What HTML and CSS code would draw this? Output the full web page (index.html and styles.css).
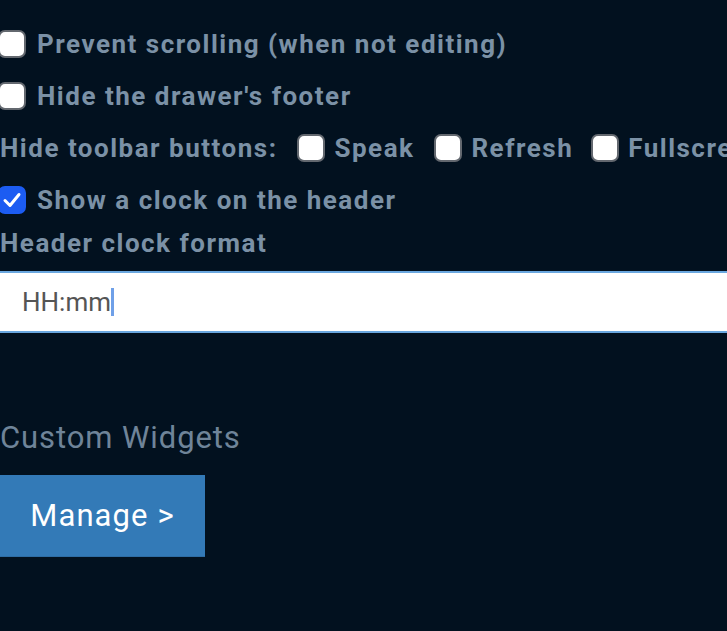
FILE: index.html
```html
<!DOCTYPE html>
<html>
<head>
<meta charset="utf-8">
<link rel="stylesheet" href="styles.css">
</head>
<body>
<div class="panel">
  <label class="row"><span class="cb"></span><span class="lbl">Prevent scrolling (when not editing)</span></label>
  <label class="row"><span class="cb"></span><span class="lbl">Hide the drawer's footer</span></label>
  <div class="row">
    <span class="lbl">Hide toolbar buttons:</span>
    <label class="opt"><span class="cb"></span><span class="lbl">Speak</span></label>
    <label class="opt"><span class="cb"></span><span class="lbl">Refresh</span></label>
    <label class="opt"><span class="cb"></span><span class="lbl">Fullscreen</span></label>
  </div>
  <label class="row"><span class="cb checked"><svg viewBox="0 0 28 28" width="28" height="28"><path d="M7 14.5 L12 19.5 L21 8.5" fill="none" stroke="#fff" stroke-width="3" stroke-linecap="round" stroke-linejoin="round"/></svg></span><span class="lbl">Show a clock on the header</span></label>
  <div class="field-label">Header clock format</div>
  <div class="input"><span class="val">HH:mm</span><span class="caret"></span></div>
  <h2 class="section">Custom Widgets</h2>
  <button class="btn">Manage &gt;</button>
</div>
</body>
</html>
```
FILE: styles.css
```css
html, body {
  margin: 0;
  padding: 0;
  background: #02111f;
  overflow: hidden;
}
.panel {
  font-family: Roboto, "Liberation Sans", sans-serif;
  padding-top: 30px;
  width: 1000px;
}
.row {
  display: flex;
  align-items: center;
  height: 28px;
  margin-bottom: 24px;
  white-space: nowrap;
}
.opt {
  display: flex;
  align-items: center;
  margin-left: 20px;
}
.opt:nth-of-type(n+3) {
  margin-left: 18px;
}
.cb {
  box-sizing: border-box;
  width: 28px;
  height: 28px;
  border: 2px solid #63686f;
  border-radius: 7px;
  background: #fff;
  flex: none;
  margin-right: 9px;
  display: inline-block;
}
.cb.checked {
  background: #1c5cf2;
  border-color: #1c5cf2;
  position: relative;
}
.cb.checked svg {
  position: absolute;
  left: -2px;
  top: -2px;
}
.row > .cb:first-child {
  margin-left: -2px;
  margin-right: 11px;
}
.lbl {
  font-size: 26px;
  font-weight: 700;
  color: #7b91a6;
  letter-spacing: 1.5px;
}
.field-label {
  font-size: 26px;
  font-weight: 700;
  color: #7b91a6;
  letter-spacing: 1.5px;
  margin-top: -9px;
  height: 28px;
  line-height: 28px;
}
.input {
  margin-top: 14px;
  height: 58px;
  border-top: 2px solid #6aa7df;
  border-bottom: 2px solid #6aa7df;
  background: #fff;
  display: flex;
  align-items: center;
  padding-left: 22px;
}
.val {
  font-size: 26px;
  color: #555;
}
.caret {
  width: 3px;
  height: 28px;
  background: #6fa0e8;
  margin-left: 0;
}
.section {
  margin: 88px 0 0 0;
  font-size: 31px;
  font-weight: 400;
  letter-spacing: 0.9px;
  color: #6f8499;
  height: 34px;
  line-height: 34px;
}
.btn {
  margin-top: 20px;
  display: block;
  width: 205px;
  height: 82px;
  border: none;
  background: #337ab7;
  color: #fff;
  font-family: Roboto, "Liberation Sans", sans-serif;
  font-size: 31px;
  letter-spacing: 1.1px;
  padding: 0;
  border-bottom: 1px solid #2e6da4;
}
```
